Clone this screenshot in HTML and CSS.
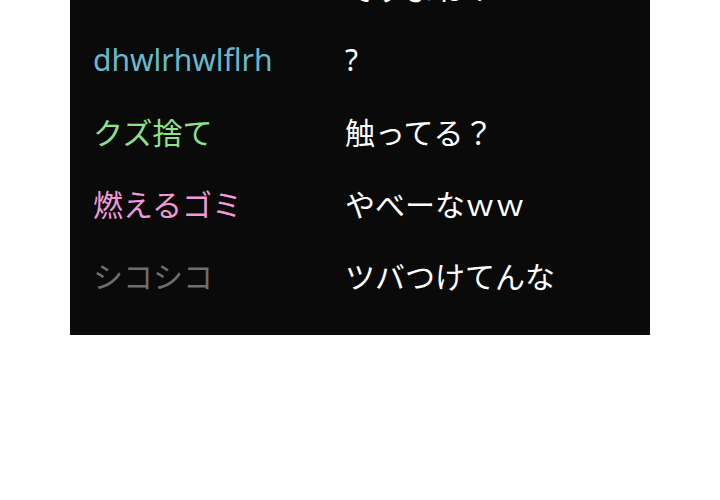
FILE: index.html
```html
<!DOCTYPE html>
<html lang="ja">

<head>
  <meta charset="UTF-8">
  <meta name="viewport" content="width=device-width, initial-scale=1.0">
  <title>コメント</title>

  <link rel="stylesheet" href="styles.css">

</head>

<body>

  <div class="chat">
    <ul class="log">
      <li class="row">
        <span class="name gray"></span>
        <span class="msg">ですよね？</span>
      </li>
      <li class="row">
        <span class="name blue">dhwlrhwlflrh</span>
        <span class="msg">?</span>
      </li>
      <li class="row">
        <span class="name green">クズ捨て</span>
        <span class="msg">触ってる？</span>
      </li>
      <li class="row">
        <span class="name pink">燃えるゴミ</span>
        <span class="msg">やべーなｗｗ</span>
      </li>
      <li class="row">
        <span class="name gray">シコシコ</span>
        <span class="msg">ツバつけてんな</span>
      </li>
    </ul>
  </div>

</body>

</html>
```

FILE: styles.css
```css
body {
  margin: 0;
  background: #fff;
  font-family: "Noto Sans", "Noto Sans CJK JP", sans-serif;
}

.chat {
  width: 580px;
  height: 335px;
  margin-left: 70px;
  background: #0a0a0a;
  overflow: hidden;
}

.log {
  list-style: none;
  margin: -49px 0 0;
  padding: 0 0 0 23px;
}

.row {
  display: flex;
  align-items: center;
  height: 72px;
  font-size: 30px;
}

.name {
  width: 252px;
  flex: none;
}

.msg {
  color: #fff;
}

.blue {
  color: #6ab8cc;
}

.green {
  color: #8ee08a;
}

.pink {
  color: #f09ad8;
}

.gray {
  color: #6e6e6e;
}
```
